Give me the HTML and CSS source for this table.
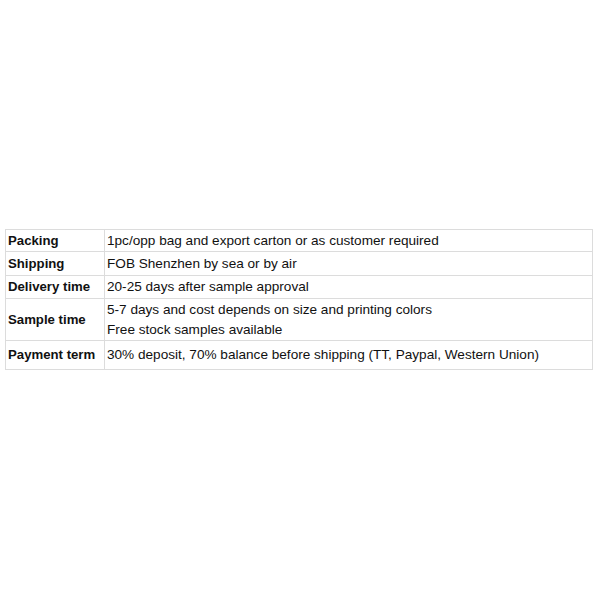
FILE: index.html
```html
<!DOCTYPE html>
<html>
<head>
<meta charset="utf-8">
<link rel="stylesheet" href="styles.css">
</head>
<body>
<div class="page">
<table class="spec">
<tr class="r1"><th>Packing</th><td>1pc/opp bag and export carton or as customer required</td></tr>
<tr class="r2"><th>Shipping</th><td>FOB Shenzhen by sea or by air</td></tr>
<tr class="r3"><th>Delivery time</th><td>20-25 days after sample approval</td></tr>
<tr class="r4"><th>Sample time</th><td><div class="line">5-7 days and cost depends on size and printing colors</div><div class="line">Free stock samples available</div></td></tr>
<tr class="r5"><th>Payment term</th><td>30% deposit, 70% balance before shipping (TT, Paypal, Western Union)</td></tr>
</table>
</div>
</body>
</html>
```
FILE: styles.css
```css
html, body {
  margin: 0;
  padding: 0;
  background: #ffffff;
}
.page {
  padding: 229px 8px 0 5px;
}
.spec {
  width: 588px;
  border-collapse: collapse;
  font-family: "Liberation Sans", Arial, sans-serif;
  font-size: 13.6px;
  color: #111111;
}
.spec th, .spec td {
  border: 1px solid #dcdcdc;
  padding: 0 2px;
  text-align: left;
  vertical-align: middle;
  line-height: 16px;
}
.spec th {
  width: 94px;
  font-size: 13.2px;
  font-weight: bold;
  white-space: nowrap;
}
.r1 th, .r1 td { height: 21px; }
.r2 th, .r2 td { height: 23px; }
.r3 th, .r3 td { height: 22px; }
.r4 th, .r4 td { height: 41px; }
.r5 th, .r5 td { height: 28px; }
.line { line-height: 20px; }
```
